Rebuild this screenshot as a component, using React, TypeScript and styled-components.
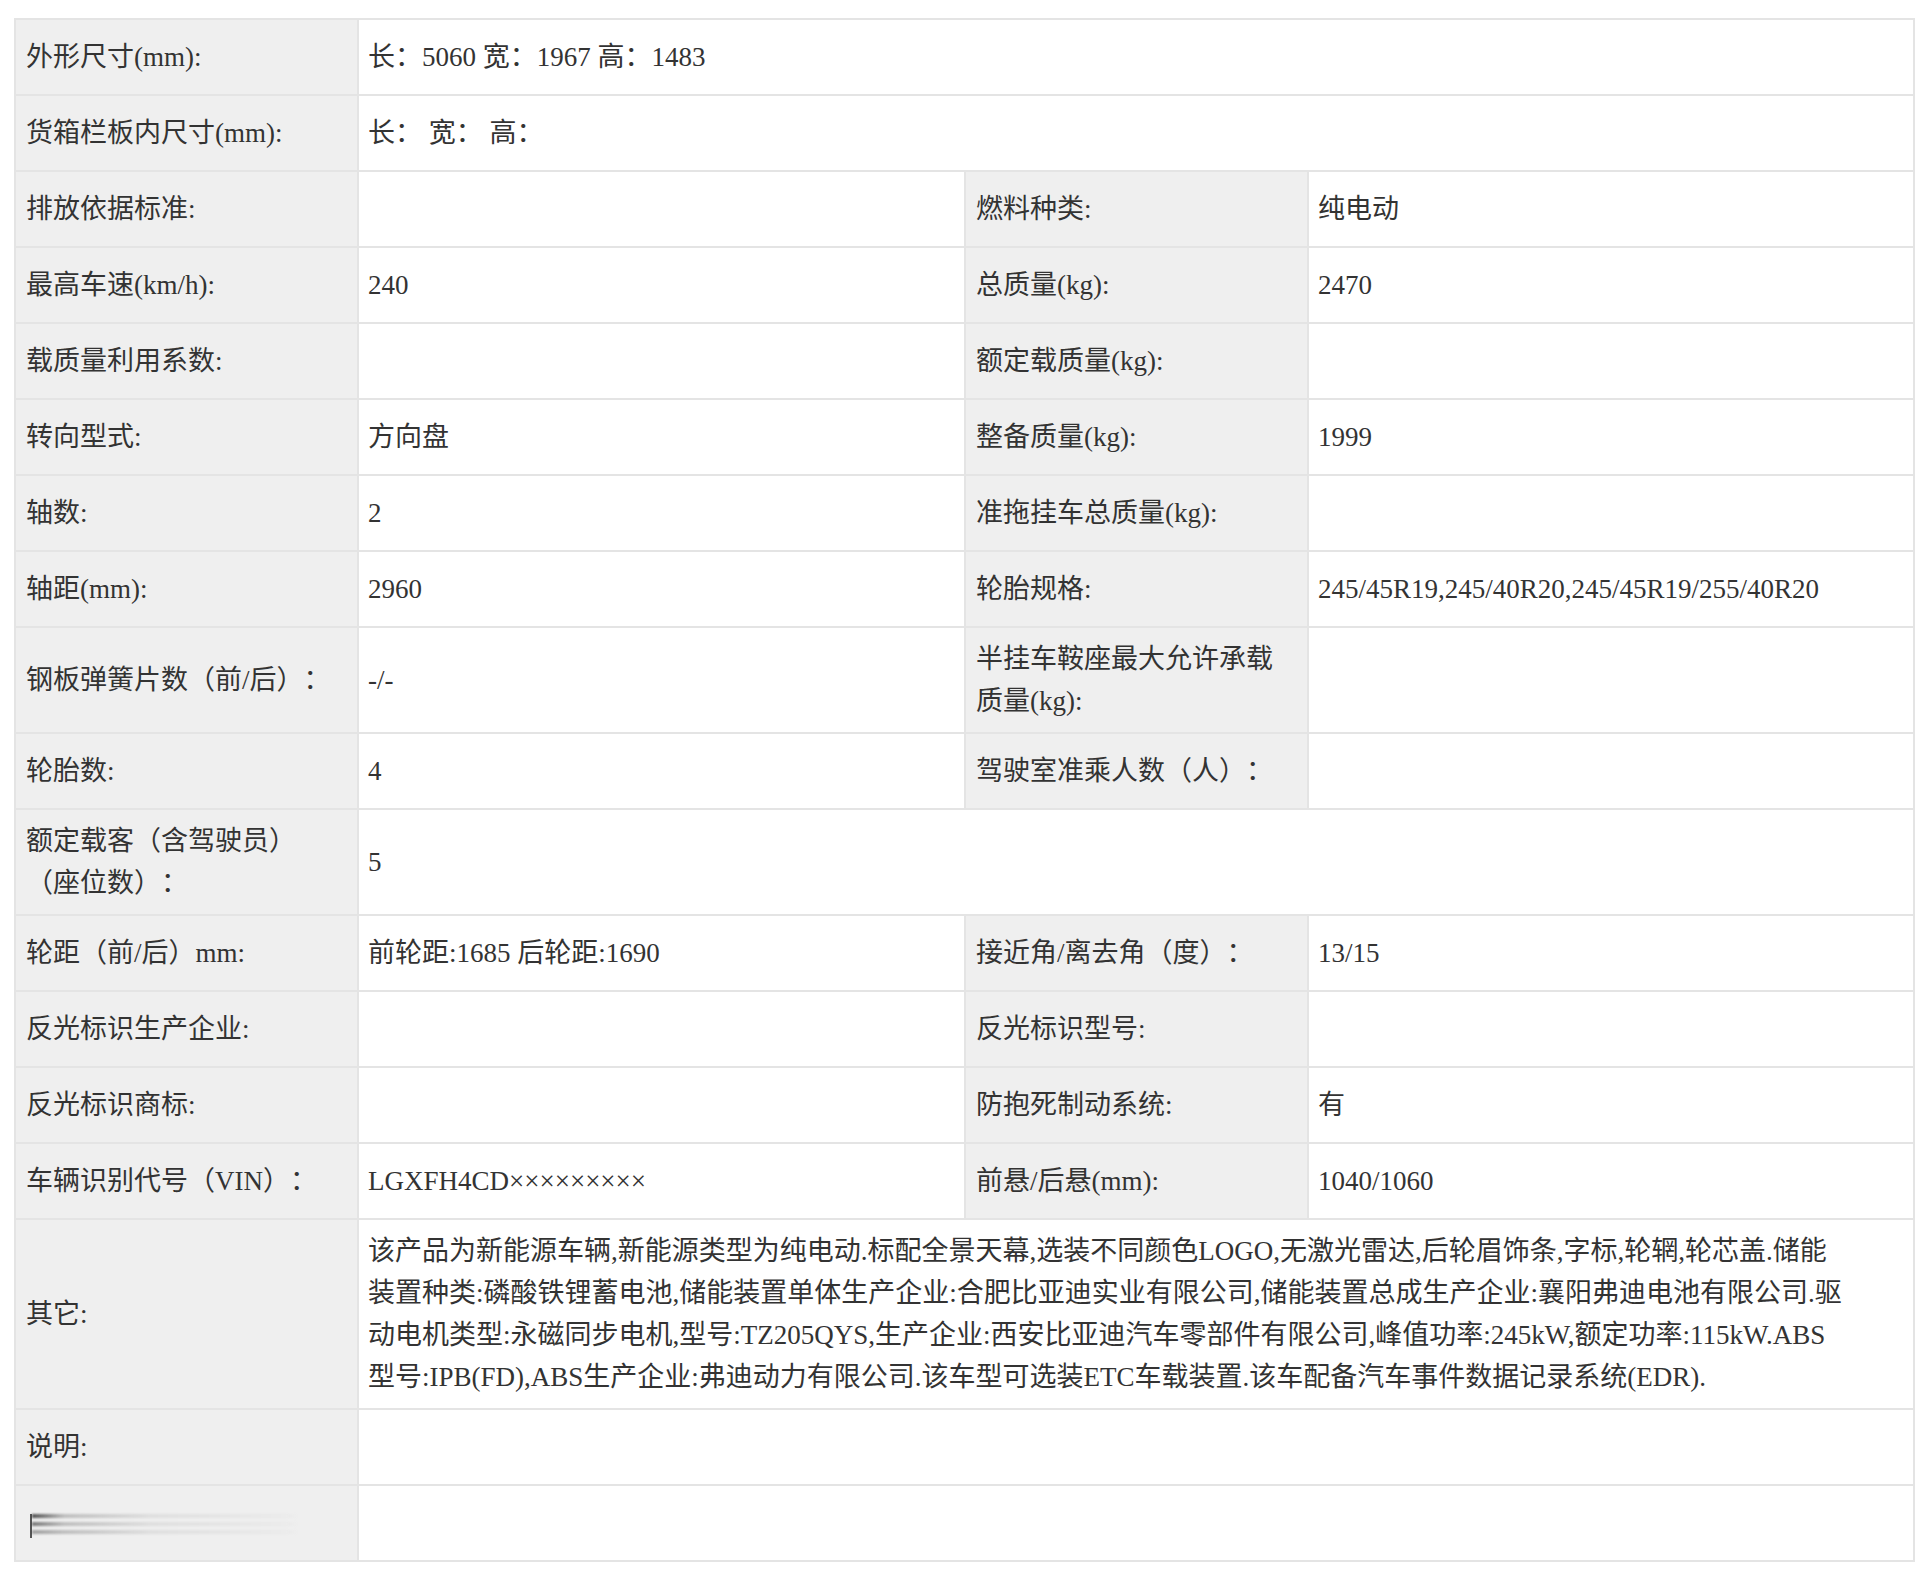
import * as React from 'react';
import styled, { createGlobalStyle } from 'styled-components';

const GlobalStyle = createGlobalStyle`
	html, body {
		margin: 0;
		padding: 0;
		background: #ffffff;
	}
	body {
		font-family: 'Liberation Serif', 'Noto Sans CJK SC', serif;
		color: #333333;
	}
`;

const Page = styled.div`
	padding: 18px 0 13px 14px;
`;

const Sheet = styled.table`
	width: 1899px;
	table-layout: fixed;
	border-collapse: collapse;
	border: 2px solid #e4e4e4;
`;

const Cell = styled.td`
	box-sizing: border-box;
	height: 76px;
	padding: 10px 12px 10px 10px;
	border: 2px solid #e4e4e4;
	font-size: 27px;
	line-height: 42px;
	vertical-align: middle;
	color: #333333;
	word-break: normal;
	text-spacing-trim: space-all;
`;

const Label = styled(Cell)`
	background: #efefef;
`;

const Value = styled(Cell)`
	background: #ffffff;
	padding-left: 9px;
`;

const Smear = styled.div`
	width: 268px;
	height: 24px;
	margin: 6px 0 0 4px;
	border-left: 2px solid #555555;
`;

const Streak = styled.div<{ $offset: number }>`
	height: 4px;
	margin-top: ${({ $offset }) => ($offset === 0 ? 0 : 4)}px;
	background: linear-gradient(
		to right,
		rgba(40, 40, 40, ${({ $offset }) => 0.8 - $offset * 0.2}) 0%,
		rgba(80, 80, 80, 0.3) 12%,
		rgba(120, 120, 120, 0.13) 45%,
		rgba(200, 200, 200, 0.08) 95%,
		rgba(239, 239, 239, 0) 100%
	);
	filter: blur(1px);
`;

type Row =
	| { kind: 'pair'; l1: React.ReactNode; v1: React.ReactNode; l2: React.ReactNode; v2: React.ReactNode }
	| { kind: 'wide'; label: React.ReactNode; value: React.ReactNode };

const remark = [
	'该产品为新能源车辆,新能源类型为纯电动.标配全景天幕,选装不同颜色LOGO,无激光雷达,后轮眉饰条,字标,轮辋,轮芯盖.储能',
	'装置种类:磷酸铁锂蓄电池,储能装置单体生产企业:合肥比亚迪实业有限公司,储能装置总成生产企业:襄阳弗迪电池有限公司.驱',
	'动电机类型:永磁同步电机,型号:TZ205QYS,生产企业:西安比亚迪汽车零部件有限公司,峰值功率:245kW,额定功率:115kW.ABS',
	'型号:IPB(FD),ABS生产企业:弗迪动力有限公司.该车型可选装ETC车载装置.该车配备汽车事件数据记录系统(EDR).',
];

const rows: Row[] = [
	{ kind: 'wide', label: '外形尺寸(mm):', value: '长：5060 宽：1967 高：1483' },
	{ kind: 'wide', label: '货箱栏板内尺寸(mm):', value: '长： 宽： 高：' },
	{ kind: 'pair', l1: '排放依据标准:', v1: '', l2: '燃料种类:', v2: '纯电动' },
	{ kind: 'pair', l1: '最高车速(km/h):', v1: '240', l2: '总质量(kg):', v2: '2470' },
	{ kind: 'pair', l1: '载质量利用系数:', v1: '', l2: '额定载质量(kg):', v2: '' },
	{ kind: 'pair', l1: '转向型式:', v1: '方向盘', l2: '整备质量(kg):', v2: '1999' },
	{ kind: 'pair', l1: '轴数:', v1: '2', l2: '准拖挂车总质量(kg):', v2: '' },
	{ kind: 'pair', l1: '轴距(mm):', v1: '2960', l2: '轮胎规格:', v2: '245/45R19,245/40R20,245/45R19/255/40R20' },
	{ kind: 'pair', l1: '钢板弹簧片数（前/后）：', v1: '-/-', l2: '半挂车鞍座最大允许承载质量(kg):', v2: '' },
	{ kind: 'pair', l1: '轮胎数:', v1: '4', l2: '驾驶室准乘人数（人）：', v2: '' },
	{
		kind: 'wide',
		label: (
			<>
				额定载客（含驾驶员）
				<br />
				（座位数）：
			</>
		),
		value: '5',
	},
	{ kind: 'pair', l1: '轮距（前/后）mm:', v1: '前轮距:1685 后轮距:1690', l2: '接近角/离去角（度）：', v2: '13/15' },
	{ kind: 'pair', l1: '反光标识生产企业:', v1: '', l2: '反光标识型号:', v2: '' },
	{ kind: 'pair', l1: '反光标识商标:', v1: '', l2: '防抱死制动系统:', v2: '有' },
	{ kind: 'pair', l1: '车辆识别代号（VIN）：', v1: 'LGXFH4CD×××××××××', l2: '前悬/后悬(mm):', v2: '1040/1060' },
	{
		kind: 'wide',
		label: '其它:',
		value: remark.map((line, i) => (
			<React.Fragment key={i}>
				{line}
				{i < remark.length - 1 && <br />}
			</React.Fragment>
		)),
	},
	{ kind: 'wide', label: '说明:', value: '' },
	{
		kind: 'wide',
		label: (
			<Smear>
				<Streak $offset={0} />
				<Streak $offset={1} />
				<Streak $offset={2} />
			</Smear>
		),
		value: '',
	},
];

export default function App() {
	return (
		<Page>
			<GlobalStyle />
			<Sheet>
				<colgroup>
					<col style={{ width: 343 }} />
					<col style={{ width: 607 }} />
					<col style={{ width: 343 }} />
					<col style={{ width: 606 }} />
				</colgroup>
				<tbody>
					{rows.map((row, i) =>
						row.kind === 'pair' ? (
							<tr key={i}>
								<Label>{row.l1}</Label>
								<Value>{row.v1}</Value>
								<Label>{row.l2}</Label>
								<Value>{row.v2}</Value>
							</tr>
						) : (
							<tr key={i}>
								<Label>{row.label}</Label>
								<Value colSpan={3}>{row.value}</Value>
							</tr>
						)
					)}
				</tbody>
			</Sheet>
		</Page>
	);
}
